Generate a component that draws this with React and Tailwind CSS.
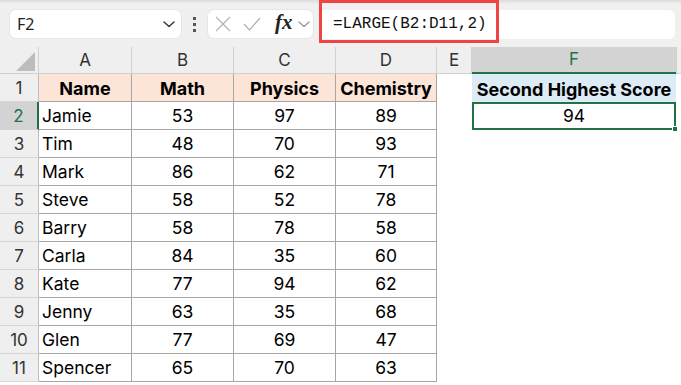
import React from 'react'

const rows = [
  ['Jamie', 53, 97, 89],
  ['Tim', 48, 70, 93],
  ['Mark', 86, 62, 71],
  ['Steve', 58, 52, 78],
  ['Barry', 58, 78, 58],
  ['Carla', 84, 35, 60],
  ['Kate', 77, 94, 62],
  ['Jenny', 63, 35, 68],
  ['Glen', 77, 69, 47],
  ['Spencer', 65, 70, 63],
]

const Chevron = ({ className = '', color = '#333' }) => (
  <svg className={className} width="12" height="7" viewBox="0 0 12 7" fill="none">
    <path d="M1 1l5 4.5L11 1" stroke={color} strokeWidth="1.4" strokeLinecap="round" strokeLinejoin="round" />
  </svg>
)

const Toolbar = () => (
  <div className="relative h-[47px] bg-[#f0f0f0] flex items-center pl-[10px] pr-[6px] pt-[1px]">
    <div className="absolute inset-x-0 top-0 h-[4px] bg-gradient-to-b from-[#dcdcdc] to-[#f0f0f0]" />
    {/* name box */}
    <div className="relative w-[171px] h-[28px] bg-white rounded-[6px] shadow-[0_0_0_1px_#e6e6e6] flex items-center justify-between pl-[7px] pr-[6px]">
      <span className="text-[16px] text-[#222] font-['Noto_Sans',sans-serif]">F2</span>
      <Chevron />
    </div>
    <div className="w-[27px] flex flex-col items-center gap-[3px]">
      <span className="w-[3px] h-[3px] bg-[#555]" />
      <span className="w-[3px] h-[3px] bg-[#555]" />
      <span className="w-[3px] h-[3px] bg-[#555]" />
    </div>
    {/* cancel / enter / fx */}
    <div className="relative w-[105px] h-[28px] bg-white rounded-[6px] shadow-[0_0_0_1px_#e6e6e6] flex items-center pl-[7px]">
      <svg width="16" height="16" viewBox="0 0 16 16">
        <path d="M1 1l14 14M15 1L1 15" stroke="#b4b4b4" strokeWidth="1.3" />
      </svg>
      <svg className="ml-[12px]" width="18" height="14" viewBox="0 0 18 14">
        <path d="M1 7l5.5 6L17 1" stroke="#b4b4b4" strokeWidth="1.3" fill="none" />
      </svg>
      <span className="ml-[14px] text-[21px] leading-none italic font-semibold text-[#222] font-['Liberation_Serif',serif] -mt-[3px]">fx</span>
      <Chevron className="ml-[5px]" color="#9a9a9a" />
    </div>
    {/* formula input */}
    <div className="ml-[6px] flex-1 h-[29px] bg-white rounded-[6px] flex items-center pl-[14px]">
      <span className="text-[16px] text-[#111] font-['Liberation_Mono',monospace]">=LARGE(B2:D11,2)</span>
    </div>
    <div className="absolute left-[319px] top-0 w-[180px] h-[43px] border-[3px] border-[#ef4444]" />
  </div>
)

const hdr = 'bg-[#efefef] border-r border-b border-[#d0d0d0] flex items-center justify-center text-[17px] text-[#333] pt-[1px]'
const rowHdr = 'bg-[#efefef] border-r border-r-[#bdbdbd] border-b border-b-[#d6d6d6] flex items-center justify-center text-[17px] text-[#333] pt-[2px]'
const cell = 'border-r border-b border-[#a6a6a6] flex items-center text-[17.5px] text-black pt-[2px]'

export default function App() {
  return (
    <div className="w-[681px] h-[385px] overflow-hidden bg-white font-['Inter',sans-serif]">
      <Toolbar />
      <div className="grid grid-cols-[39px_93px_102px_102px_101px_35px_204px_5px] grid-rows-[27px_repeat(11,28px)]">
        {/* corner */}
        <div className="relative bg-[#efefef] border-r border-b border-[#d0d0d0]">
          <div className="absolute right-[3px] bottom-[2px] w-0 h-0 border-l-[19px] border-l-transparent border-b-[19px] border-b-[#bdbdbd]" />
        </div>
        {['A', 'B', 'C', 'D', 'E'].map(l => (
          <div key={l} className={hdr}>{l}</div>
        ))}
        <div className="bg-[#d3d3d3] border-b-2 border-[#217346] flex items-center justify-center text-[17px] text-[#217346] pt-[1px]">F</div>
        <div className="bg-[#efefef] border-l border-b border-[#d0d0d0]" />

        {/* row 1 */}
        <div className={rowHdr}>1</div>
        {['Name', 'Math', 'Physics', 'Chemistry'].map(t => (
          <div key={t} className={`${cell} bg-[#fce4d6] justify-center font-bold text-[18px]`}>{t}</div>
        ))}
        <div />
        <div className="bg-[#ddebf7] flex items-center justify-center text-[18px] font-bold text-black pt-[2px]">Second Highest Score</div>
        <div />

        {rows.map((r, i) => (
          <React.Fragment key={r[0]}>
            {i === 0 ? (
              <div className="bg-[#d3d3d3] border-r-2 border-r-[#217346] border-b border-b-[#d6d6d6] flex items-center justify-center text-[17px] text-[#217346] pt-[2px]">2</div>
            ) : (
              <div className={rowHdr}>{i + 2}</div>
            )}
            <div className={`${cell} pl-[3px]`}>{r[0]}</div>
            <div className={`${cell} justify-center`}>{r[1]}</div>
            <div className={`${cell} justify-center`}>{r[2]}</div>
            <div className={`${cell} justify-center`}>{r[3]}</div>
            <div />
            {i === 0 ? (
              <div className="relative border-2 border-[#217346] flex items-center justify-center text-[17.5px] text-black pt-[1px]">
                94
                <span className="absolute -right-[4px] -bottom-[4px] w-[6px] h-[6px] bg-[#217346] border border-white" />
              </div>
            ) : (
              <div />
            )}
            <div />
          </React.Fragment>
        ))}
      </div>
    </div>
  )
}
